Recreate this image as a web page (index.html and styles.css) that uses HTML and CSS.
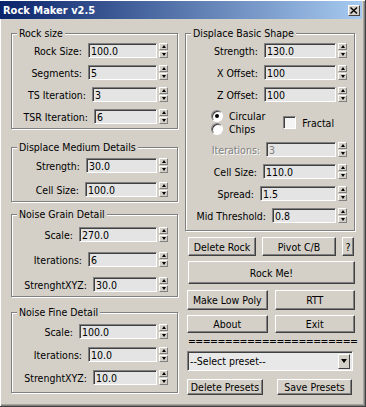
FILE: index.html
```html
<!DOCTYPE html>
<html lang="en">
<head>
  <meta charset="UTF-8" />
  <title>Rock Maker v2.5</title>
  <link rel="stylesheet" href="styles.css">
</head>
<body>
  <div class="window">
    <div class="titlebar">
      <span class="title">Rock Maker v2.5</span>
      <span class="close">
        <svg width="8" height="7" viewBox="0 0 8 7"><path d="M0.5 0.5 L7 6.5 M7 0.5 L0.5 6.5" stroke="#000" stroke-width="1.4"/></svg>
      </span>
    </div>

    <div class="content">
      <div class="col col-left">
        <fieldset class="group g-size">
          <legend>Rock size</legend>
          <div class="row"><label>Rock Size:</label><input class="field w69" value="100.0"><span class="arrows"><i class="up"></i><i class="down"></i></span></div>
          <div class="row"><label>Segments:</label><input class="field w69" value="5"><span class="arrows"><i class="up"></i><i class="down"></i></span></div>
          <div class="row"><label>TS Iteration:</label><input class="field w65" value="3"><span class="arrows"><i class="up"></i><i class="down"></i></span></div>
          <div class="row"><label>TSR Iteration:</label><input class="field w63" value="6"><span class="arrows"><i class="up"></i><i class="down"></i></span></div>
        </fieldset>

        <fieldset class="group g-medium">
          <legend>Displace Medium Details</legend>
          <div class="row"><label>Strength:</label><input class="field w71" value="30.0"><span class="arrows"><i class="up"></i><i class="down"></i></span></div>
          <div class="row"><label>Cell Size:</label><input class="field w72" value="100.0"><span class="arrows"><i class="up"></i><i class="down"></i></span></div>
        </fieldset>

        <fieldset class="group g-grain">
          <legend>Noise Grain Detail</legend>
          <div class="row"><label>Scale:</label><input class="field w78" value="270.0"><span class="arrows"><i class="up"></i><i class="down"></i></span></div>
          <div class="row"><label>Iterations:</label><input class="field w69" value="6"><span class="arrows"><i class="up"></i><i class="down"></i></span></div>
          <div class="row"><label>StrenghtXYZ:</label><input class="field w64" value="30.0"><span class="arrows"><i class="up"></i><i class="down"></i></span></div>
        </fieldset>

        <fieldset class="group g-fine">
          <legend>Noise Fine Detail</legend>
          <div class="row"><label>Scale:</label><input class="field w78" value="100.0"><span class="arrows"><i class="up"></i><i class="down"></i></span></div>
          <div class="row"><label>Iterations:</label><input class="field w69" value="10.0"><span class="arrows"><i class="up"></i><i class="down"></i></span></div>
          <div class="row"><label>StrenghtXYZ:</label><input class="field w64" value="10.0"><span class="arrows"><i class="up"></i><i class="down"></i></span></div>
        </fieldset>
      </div>

      <div class="col col-right">
        <fieldset class="group g-basic">
          <legend>Displace Basic Shape</legend>
          <div class="row"><label>Strength:</label><input class="field w72" value="130.0"><span class="arrows"><i class="up"></i><i class="down"></i></span></div>
          <div class="row"><label>X Offset:</label><input class="field w72" value="100"><span class="arrows"><i class="up"></i><i class="down"></i></span></div>
          <div class="row"><label>Z Offset:</label><input class="field w72" value="100"><span class="arrows"><i class="up"></i><i class="down"></i></span></div>

          <div class="options">
            <div class="radios">
              <div class="radio-item"><span class="radio checked"></span>Circular</div>
              <div class="radio-item"><span class="radio"></span>Chips</div>
            </div>
            <div class="check-item"><span class="checkbox"></span>Fractal</div>
          </div>

          <div class="row disabled"><label>Iterations:</label><input class="field w70" value="3" disabled><span class="arrows"><i class="up"></i><i class="down"></i></span></div>
          <div class="row"><label>Cell Size:</label><input class="field w73" value="110.0"><span class="arrows"><i class="up"></i><i class="down"></i></span></div>
          <div class="row"><label>Spread:</label><input class="field w76" value="1.5"><span class="arrows"><i class="up"></i><i class="down"></i></span></div>
          <div class="row"><label>Mid Threshold:</label><input class="field w64" value="0.8"><span class="arrows"><i class="up"></i><i class="down"></i></span></div>
        </fieldset>

        <div class="btn-row top-row">
          <button class="btn b-delete">Delete Rock</button>
          <button class="btn b-pivot">Pivot C/B</button>
          <button class="btn b-help">?</button>
        </div>
        <button class="btn rock-me">Rock Me!</button>
        <div class="btn-row pair lowpoly-row">
          <button class="btn">Make Low Poly</button>
          <button class="btn">RTT</button>
        </div>
        <div class="btn-row pair about-row">
          <button class="btn">About</button>
          <button class="btn">Exit</button>
        </div>
        <div class="separator">=======================</div>
        <div class="select">
          <span>--Select preset--</span>
          <span class="select-arrow"><i></i></span>
        </div>
        <div class="btn-row presets-row">
          <button class="btn">Delete Presets</button>
          <button class="btn">Save Presets</button>
        </div>
      </div>
    </div>
  </div>
</body>
</html>
```

FILE: styles.css
```css
body {
  margin: 0;
  font-family: "DejaVu Sans Condensed", "DejaVu Sans", sans-serif;
  font-stretch: condensed;
  font-size: 10.5px;
  color: #000;
  background: #d4d0c8;
}
.window {
  width: 366px;
  height: 407px;
  box-sizing: border-box;
  background: #d4d0c8;
  border-right: 1px solid #404040;
  border-bottom: 1px solid #404040;
  box-shadow: inset 1px 1px #fff, inset -1px -1px #808080, inset -2px -2px #a8a49c;
  padding-top: 1px;
}
.titlebar {
  height: 18px;
  margin-right: 3px;
  padding: 0 2px 0 3px;
  background: linear-gradient(to right, #0a246a, #a6caf0);
  display: flex;
  align-items: center;
  justify-content: space-between;
}
.title {
  color: #fff;
  font-weight: bold;
  font-size: 11px;
}
.close {
  width: 12px;
  height: 11px;
  box-sizing: border-box;
  background: #d4d0c8;
  border: 1px solid;
  border-color: #fff #404040 #404040 #fff;
  display: flex;
  align-items: center;
  justify-content: center;
}
.content {
  display: flex;
  gap: 7px;
  padding: 8px 10px 0 11px;
}
.col {
  display: flex;
  flex-direction: column;
}
.col-left {
  width: 167px;
  flex-shrink: 0;
}
.col-right {
  flex: 1;
  min-width: 0;
}

/* group boxes */
.group {
  margin: 0;
  min-width: 0;
  border: 1px solid #808080;
  box-shadow: inset 1px 1px #fff, 1px 1px #fff;
  padding: 3px 9px 4px 6px;
  display: flex;
  flex-direction: column;
  gap: 7px;
}
.group legend {
  margin-left: -1px;
  padding: 0 2px;
  line-height: 13px;
  background: #d4d0c8;
}
.g-medium {
  margin-top: 12px;
  gap: 9px;
  padding-top: 4px;
}
.g-grain {
  margin-top: 6px;
  gap: 10px;
  padding-top: 6px;
}
.g-fine {
  margin-top: 9px;
  gap: 8px;
  padding-top: 5px;
  padding-bottom: 7px;
}
.g-basic {
  padding-right: 7px;
  padding-bottom: 7px;
}

/* spinner rows */
.row {
  display: flex;
  justify-content: flex-end;
  align-items: center;
  height: 15px;
}
.row label {
  margin-right: 6px;
  white-space: nowrap;
}
.field {
  height: 15px;
  box-sizing: border-box;
  margin: 0 2px 0 0;
  padding: 0 2px;
  border: 1px solid;
  border-color: #808080 #fff #fff #808080;
  box-shadow: inset 1px 1px #404040;
  background: #e4e4e4;
  font: inherit;
  color: #000;
  outline: none;
}
.w63 { width: 63px; }
.w64 { width: 64px; }
.w65 { width: 65px; }
.w69 { width: 69px; }
.w70 { width: 70px; }
.w71 { width: 71px; }
.w72 { width: 72px; }
.w73 { width: 73px; }
.w76 { width: 76px; }
.w78 { width: 78px; }
.arrows {
  width: 9px;
  height: 15px;
  display: flex;
  flex-direction: column;
  gap: 1px;
}
.arrows i {
  flex: 1;
  box-sizing: border-box;
  border: 1px solid;
  border-color: #fff #808080 #808080 #fff;
  background: #d4d0c8;
  display: flex;
  align-items: center;
  justify-content: center;
}
.arrows i::after {
  content: "";
  border-left: 2.5px solid transparent;
  border-right: 2.5px solid transparent;
}
.arrows .up::after {
  border-bottom: 3px solid #000;
}
.arrows .down::after {
  border-top: 3px solid #000;
}
.disabled label {
  color: #808080;
  text-shadow: 1px 1px #fff;
}
.disabled .field {
  color: #808080;
}

/* radio / checkbox */
.options {
  display: flex;
  align-items: center;
  padding-left: 19px;
  gap: 18px;
  margin: 1px 0 0;
}
.radios {
  display: flex;
  flex-direction: column;
  gap: 1px;
}
.radio-item,
.check-item {
  display: flex;
  align-items: center;
  gap: 6px;
}
.radio {
  width: 12px;
  height: 12px;
  box-sizing: border-box;
  border-radius: 50%;
  border: 1px solid;
  border-color: #808080 #fff #fff #808080;
  background: #fff;
  box-shadow: inset 1px 1px #404040;
  display: flex;
  align-items: center;
  justify-content: center;
}
.radio.checked::after {
  content: "";
  width: 4px;
  height: 4px;
  border-radius: 50%;
  background: #000;
}
.checkbox {
  width: 13px;
  height: 13px;
  box-sizing: border-box;
  border: 1px solid;
  border-color: #808080 #fff #fff #808080;
  box-shadow: inset 1px 1px #404040;
  background: #f4f4f4;
}

/* buttons */
.btn {
  font: inherit;
  color: #000;
  background: #d4d0c8;
  border: 1px solid;
  border-color: #fff #404040 #404040 #fff;
  box-shadow: inset -1px -1px #808080;
  padding: 0;
  margin: 0;
  box-sizing: border-box;
}
.btn-row {
  display: flex;
  gap: 6px;
}
.top-row {
  margin: 6px 0 0 3px;
  height: 19px;
}
.b-delete { width: 68px; }
.b-pivot { width: 74px; }
.b-help { width: 12px; }
.rock-me {
  margin: 5px 0 0 3px;
  height: 23px;
}
.pair .btn {
  flex: 1;
}
.pair {
  gap: 7px;
  margin-left: 2px;
}
.lowpoly-row {
  margin-top: 6px;
  height: 20px;
}
.about-row {
  margin-top: 5px;
  height: 18px;
}
.separator {
  margin: 2px 0 0 3px;
  line-height: 12px;
  white-space: nowrap;
  letter-spacing: -0.55px;
}
.select {
  margin: 4px 2px 0 2px;
  height: 20px;
  box-sizing: border-box;
  border: 1px solid;
  border-color: #808080 #fff #fff #808080;
  box-shadow: inset 1px 1px #404040;
  background: #e8e8e8;
  display: flex;
  align-items: center;
  justify-content: space-between;
  padding: 0 2px 0 2px;
}
.select-arrow {
  width: 12px;
  height: 15px;
  box-sizing: border-box;
  border: 1px solid;
  border-color: #fff #404040 #404040 #fff;
  background: #d4d0c8;
  display: flex;
  align-items: center;
  justify-content: center;
}
.select-arrow i {
  border-left: 3.5px solid transparent;
  border-right: 3.5px solid transparent;
  border-top: 4px solid #000;
}
.presets-row {
  margin: 8px 3px 0 2px;
  height: 16px;
  justify-content: space-between;
}
.presets-row .btn {
  width: 76px;
}
.presets-row .btn + .btn {
  width: 75px;
}
```
